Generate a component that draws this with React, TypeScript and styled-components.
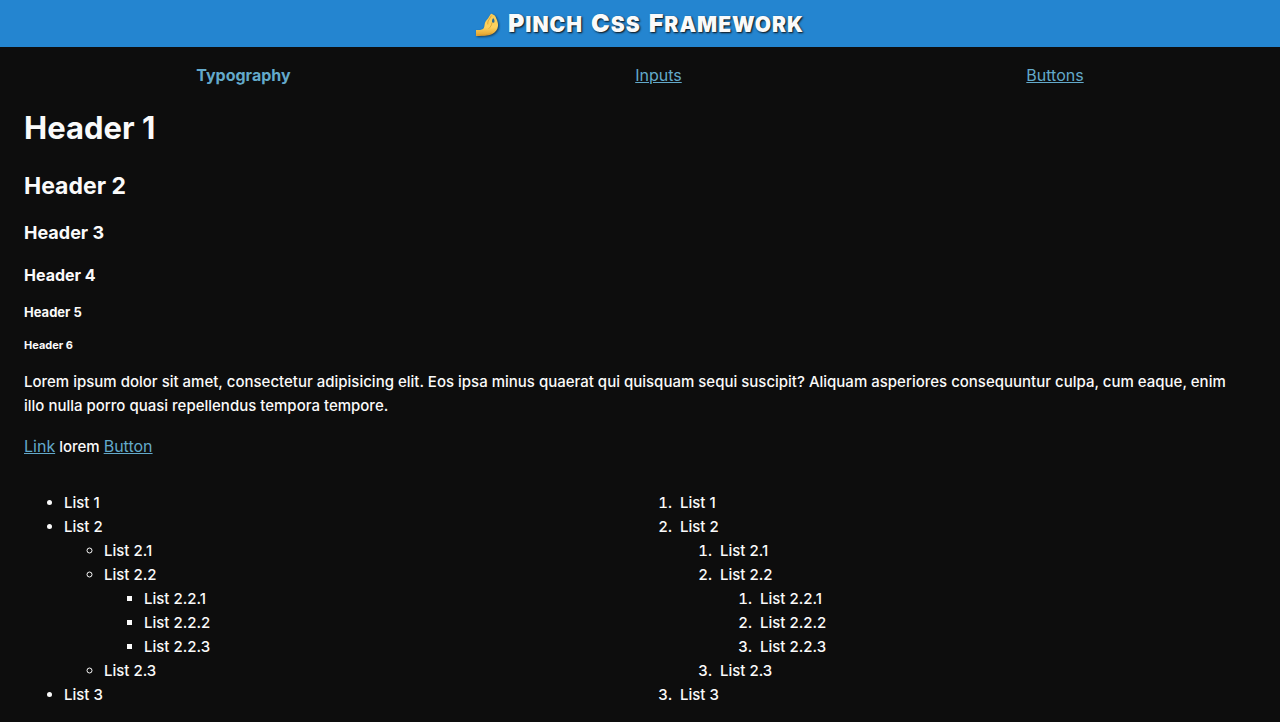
import React from "react";
import styled, { createGlobalStyle, css } from "styled-components";

const GlobalStyle = createGlobalStyle`
  body {
    margin: 0;
    background: #0d0d0d;
    color: #fafafa;
    font-family: Inter, "Liberation Sans", sans-serif;
    font-size: 15px;
    font-weight: 500;
    line-height: 24px;
  }
`;

const Banner = styled.header`
  display: flex;
  align-items: center;
  justify-content: center;
  gap: 8px;
  padding: 9px 16px 7px;
  background: #2485d0;
`;

const BannerTitle = styled.h1`
  display: flex;
  align-items: baseline;
  gap: 8px;
  margin: 0;
  font-size: 21px;
  line-height: 31px;
  font-weight: 900;
  letter-spacing: 1px;
  text-transform: uppercase;
  text-shadow: 1px 1px 2px #0d0d0d;
`;

const TitleWord = styled.span`
  &::first-letter {
    font-size: 25px;
    line-height: 1;
  }
`;

const HandIcon = styled.svg`
  width: 24px;
  height: 24px;
  filter: drop-shadow(1px 1px 1px rgba(13, 13, 13, 0.6));
`;

const Nav = styled.nav`
  display: flex;
  justify-content: space-around;
  padding: 16px 24px;
`;

const linkStyle = css`
  color: #63a9ca;
  font-size: 16px;
  font-weight: 400;
  text-decoration: underline;
`;

const NavLink = styled.a<{ $active?: boolean }>`
  ${linkStyle}
  ${({ $active }) => $active && "font-weight: 700; text-decoration: none;"}
`;

const Main = styled.main`
  padding: 0 24px 16px;
`;

const Heading = styled.h2<{ $size: number; $line: number }>`
  margin: 0 0 16px;
  font-weight: 700;
  font-size: ${({ $size }) => $size}px;
  line-height: ${({ $line }) => $line}px;
`;

const Paragraph = styled.p`
  margin: 0 0 16px;
  padding-right: 16px;
`;

const TextLink = styled.a`
  ${linkStyle}
`;

const TextButton = styled.button`
  padding: 0;
  border: 0;
  background: none;
  font: inherit;
  cursor: pointer;
  ${linkStyle}
`;

const Columns = styled.div`
  display: grid;
  grid-template-columns: 1fr 1fr;
  padding-top: 16px;
`;

const List = styled.ul`
  margin: 0;
  padding-left: 40px;

  ol& > li::marker {
    content: counter(list-item) ".\\00a0\\00a0";
  }
`;

const headings = [
  { tag: "h1", size: 31, line: 50 },
  { tag: "h2", size: 23, line: 34 },
  { tag: "h3", size: 18, line: 28 },
  { tag: "h4", size: 16, line: 24 },
  { tag: "h5", size: 13, line: 18 },
  { tag: "h6", size: 11, line: 17 },
] as const;

function SampleList({ kind }: { kind: "ul" | "ol" }) {
  return (
    <List as={kind}>
      <li>List 1</li>
      <li>
        List 2
        <List as={kind}>
          <li>List 2.1</li>
          <li>
            List 2.2
            <List as={kind}>
              <li>List 2.2.1</li>
              <li>List 2.2.2</li>
              <li>List 2.2.3</li>
            </List>
          </li>
          <li>List 2.3</li>
        </List>
      </li>
      <li>List 3</li>
    </List>
  );
}

function PinchedHand() {
  return (
    <HandIcon viewBox="0 0 24 24" aria-hidden="true">
      <defs>
        <linearGradient id="skin" x1="0" y1="0" x2="0" y2="1">
          <stop offset="0" stopColor="#f8cb55" />
          <stop offset="0.6" stopColor="#ffd35f" />
          <stop offset="1" stopColor="#e3a12c" />
        </linearGradient>
      </defs>
      <path
        d="M0 17C3 17 5.500 17 7 16C8.400 15 8.400 12.500 8.800 10.500C9.300 8.300 10.800 7 12 5.600L14.400 1.600C15 .3 16.200 .4 16.800 1.400C18.600 1.800 19.600 3.200 20.300 5.400C21.400 8 22.300 10 22 13C21.700 16.500 19.500 18.800 17 20.600C13.800 22.800 8 23 0 23Z"
        fill="url(#skin)"
      />
      <path
        d="M17.300 5.200C18.500 6 18.800 8 18.200 9.600C17.100 10.100 15.900 9.400 16 8.200C16.100 6.900 16.400 5.800 17.300 5.200Z"
        fill="#2e6c95"
      />
      <path
        d="M15.200 3L12.800 7C12 8.200 11.700 9.400 11.800 11M15.900 10C15.700 12 14.600 14 13 15.400M1 22C7 22.200 12 22 15.500 20.300"
        fill="none"
        stroke="#d99c31"
        strokeWidth="0.8"
        strokeLinecap="round"
      />
    </HandIcon>
  );
}

export default function App() {
  return (
    <>
      <GlobalStyle />
      <Banner>
        <PinchedHand />
        <BannerTitle>
          <TitleWord>Pinch</TitleWord> <TitleWord>Css</TitleWord>{" "}
          <TitleWord>Framework</TitleWord>
        </BannerTitle>
      </Banner>
      <Nav>
        <NavLink href="#typography" $active>
          Typography
        </NavLink>
        <NavLink href="#inputs">Inputs</NavLink>
        <NavLink href="#buttons">Buttons</NavLink>
      </Nav>
      <Main>
        {headings.map(({ tag, size, line }, i) => (
          <Heading key={tag} as={tag} $size={size} $line={line}>
            Header {i + 1}
          </Heading>
        ))}
        <Paragraph>
          Lorem ipsum dolor sit amet, consectetur adipisicing elit. Eos ipsa
          minus quaerat qui quisquam sequi suscipit? Aliquam asperiores
          consequuntur culpa, cum eaque, enim illo nulla porro quasi repellendus
          tempora tempore.
        </Paragraph>
        <Paragraph>
          <TextLink href="#link">Link</TextLink> lorem{" "}
          <TextButton type="button">Button</TextButton>
        </Paragraph>
        <Columns>
          <SampleList kind="ul" />
          <SampleList kind="ol" />
        </Columns>
      </Main>
    </>
  );
}
